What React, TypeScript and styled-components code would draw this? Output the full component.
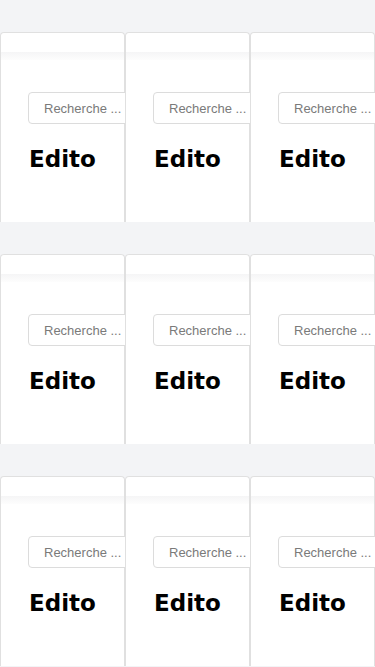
import React from "react";
import styled, { createGlobalStyle } from "styled-components";

const Global = createGlobalStyle`
  html, body { margin: 0; padding: 0; background: #f3f4f6; overflow: hidden; }
  * { box-sizing: border-box; }
`;

const Page = styled.div`
  width: 375px;
  height: 667px;
  overflow: hidden;
  padding-top: 32px;
  display: flex;
  flex-direction: column;
  gap: 32px;
`;

const Row = styled.div`
  display: flex;
`;

const Card = styled.div`
  flex: 0 0 125px;
  width: 125px;
  height: 190px;
  background: #fff;
  border: 1px solid #e0e0e0;
  border-bottom: none;
  border-radius: 4px 4px 0 0;
  display: flex;
  flex-direction: column;
`;

const Header = styled.div`
  height: 19px;
`;

const Shade = styled.div`
  height: 8px;
  background: linear-gradient(#f5f5f6, #fdfdfd);
`;

const Body = styled.div`
  padding: 32px 0 0 27px;
  display: flex;
  flex-direction: column;
  align-items: flex-start;
`;

const Search = styled.input`
  width: 130px;
  height: 32px;
  border: 1px solid #dcdcdc;
  border-radius: 4px;
  padding: 0 0 0 15px;
  font-family: "Liberation Sans", Arial, sans-serif;
  font-size: 13px;
  background: #fff;
  outline: none;
  &::placeholder { color: #7a7a7a; }
`;

const Title = styled.h2`
  margin: 22px 0 0 1px;
  font-family: "DejaVu Sans", Verdana, sans-serif;
  font-weight: bold;
  font-size: 23px;
  line-height: 26px;
  color: #000;
`;

export default function App() {
  return (
    <>
      <Global />
      <Page>
        {[0, 1, 2].map((r) => (
          <Row key={r}>
            {[0, 1, 2].map((c) => (
              <Card key={c}>
                <Header />
                <Shade />
                <Body>
                  <Search placeholder="Recherche ..." />
                  <Title>Edito</Title>
                </Body>
              </Card>
            ))}
          </Row>
        ))}
      </Page>
    </>
  );
}
